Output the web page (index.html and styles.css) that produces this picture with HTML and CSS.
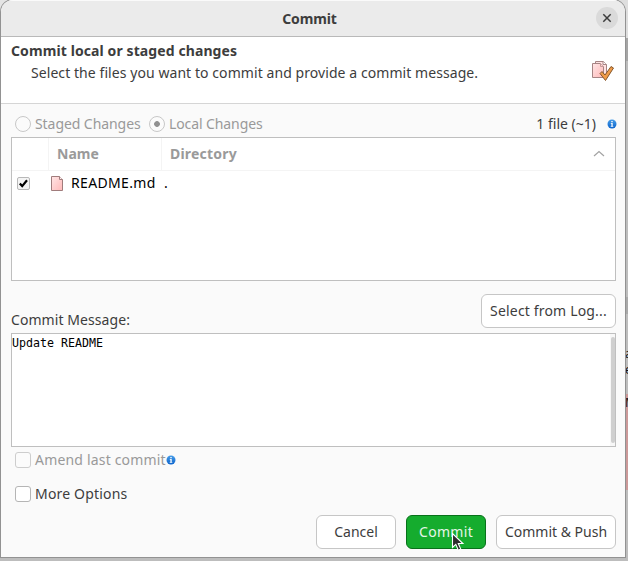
FILE: index.html
```html
<!DOCTYPE html>
<html lang="en">
<head>
<meta charset="utf-8">
<title>Commit</title>
<link rel="stylesheet" href="styles.css">
</head>
<body>
<div class="backdrop" aria-hidden="true">
  <span class="patch top-left"></span><span class="patch top-right"></span>
  <span class="patch band"></span><span class="patch deleted"></span>
  <span class="patch deleted-left"></span><span class="patch chip"></span>
  <span class="peek peek-a">a</span><span class="peek peek-e">e</span><span class="peek peek-m">M</span>
</div>
<main class="dialog">
  <header class="titlebar">
    <h1 class="title">Commit</h1>
    <button class="close" aria-label="Close"><svg width="22" height="22" viewBox="0 0 22 22"><path d="M7.3 7.3l7.4 7.4M14.7 7.3l-7.4 7.4" stroke="#3d3d3d" stroke-width="1.5"/></svg></button>
  </header>
  <section class="banner">
    <div class="banner-text">
      <h2 class="heading">Commit local or staged changes</h2>
      <p class="subtitle">Select the files you want to commit and provide a commit message.</p>
    </div>
    <svg class="banner-icon" width="24" height="22" viewBox="0 0 24 22">
      <defs><linearGradient id="paper" x1="0" y1="0" x2="1" y2="1"><stop offset="0" stop-color="#ffe6e6"/><stop offset="1" stop-color="#ffb9b9"/></linearGradient></defs>
      <path d="M4.500 1.500h8l3 3v11h-11z" fill="#ffe2e2" stroke="#a68484"/>
      <path d="M12 1.500v3h3.500" fill="#fff" stroke="#a68484"/>
      <path d="M1.500 3.500h8l3 3v11h-11z" fill="url(#paper)" stroke="#a68484"/>
      <path d="M9.500 3.500v3h3" fill="#ffd0d0" stroke="#c49a9a"/>
      <path d="M9 13.500l2-2 3 3.500 6-8.500 2.500 1.500-8 12.500z" fill="#f09b48" stroke="#84572c" stroke-linejoin="round"/>
    </svg>
  </section>
  <section class="content">
    <div class="mode-row">
      <span class="radio"></span><span class="label dim staged">Staged Changes</span>
      <span class="radio checked"></span><span class="label dim local">Local Changes</span>
      <span class="count">1 file (~1)</span>
      <svg class="info" width="10" height="10" viewBox="0 0 10 10"><defs><linearGradient id="blue" x1="0" y1="0" x2="0" y2="1"><stop offset="0" stop-color="#479de8"/><stop offset="1" stop-color="#0b63cc"/></linearGradient></defs><circle cx="5" cy="5" r="4.500" fill="url(#blue)"/><path d="M4.300 2h1.400v1.200H4.300zM3.800 4h1.900v3h.6v.8H3.700V7h.7V4.800h-.6z" fill="#fff"/></svg>
    </div>
    <div class="files">
      <div class="files-head">
        <span class="col-check"></span><span class="col-name"><b>Name</b></span>
        <span class="col-dir"><b>Directory</b></span>
        <svg class="sort" width="12" height="8" viewBox="0 0 12 8"><path d="M1 6l5-4.500L11 6" fill="none" stroke="#a3a3a3" stroke-width="1.200"/></svg>
      </div>
      <div class="file-row">
        <svg class="tick" width="13" height="13" viewBox="0 0 13 13"><rect x=".5" y=".5" width="12" height="12" rx="1.500" fill="#f4f4f4" stroke="#b8b8b8"/><path d="M2.800 6.500l2.400 2.600 4.800-5.800" fill="none" stroke="#000" stroke-width="2.200"/></svg>
        <svg class="file" width="12" height="15" viewBox="0 0 12 15"><path d="M.5.5h8l3 3v11H.5z" fill="url(#paper)" stroke="#a07c7c"/><path d="M8.500.5v3h3" fill="#fff0f0" stroke="#a07c7c"/></svg>
        <span class="filename">README.md</span><span class="dirname">.</span>
      </div>
    </div>
    <div class="message-row">
      <span class="message-label">Commit Message:</span>
      <button class="button log">Select from Log...</button>
    </div>
    <div class="message"><span class="message-text">Update README</span><span class="track"><span class="thumb"></span></span></div>
    <div class="option amend">
      <span class="checkbox disabled"></span><span class="label dim">Amend last commit</span>
      <svg class="amend-info" width="10" height="10" viewBox="0 0 10 10"><circle cx="5" cy="5" r="4.500" fill="url(#blue)"/><path d="M4.300 2h1.400v1.200H4.300zM3.800 4h1.900v3h.6v.8H3.700V7h.7V4.800h-.6z" fill="#fff"/></svg>
    </div>
    <div class="option"><span class="checkbox"></span><span class="label">More Options</span></div>
    <footer class="actions">
      <button class="button cancel">Cancel</button>
      <button class="button primary">Commit</button>
      <button class="button push">Commit &amp; Push</button>
    </footer>
  </section>
</main>
<svg class="cursor" width="14" height="20" viewBox="0 0 14 20"><path d="M1.500 1.500v14l3.300-3.100 2.500 5.800 2.500-1.100-2.500-5.600h4.600z" fill="#2c2c2c" stroke="#fff" stroke-width="1.100"/></svg>
</body>
</html>
```
FILE: styles.css
```css
* { box-sizing: border-box; }
body {
  margin: 0;
  width: 628px;
  height: 561px;
  overflow: hidden;
  position: relative;
  background: #bdbdbd;
  color: #3d3d3d;
  font: 14px/20px "Noto Sans", "Open Sans", sans-serif;
  white-space: nowrap;
}
h1, h2, p { margin: 0; }
button { padding: 0; border: 0; font: inherit; color: inherit; }
svg { display: block; flex: none; }

.backdrop { position: absolute; inset: 0; }
.patch { position: absolute; }
.top-left { left: 0; top: 0; width: 12px; height: 12px; background: #e4e4e4; }
.top-right { right: 0; top: 0; width: 12px; height: 38px; background: #dedede; }
.band { right: 0; top: 38px; width: 3px; height: 23px; background: #a5a5a5; }
.chip { right: 0; top: 297px; width: 3px; height: 17px; background: #a9a9a9; }
.deleted { right: 0; top: 394px; width: 3px; height: 96px; background: #c99; }
.deleted-left { left: 0; top: 394px; width: 1px; height: 34px; background: #c99; }
.peek { position: absolute; left: 625px; color: #111; font-size: 12px; line-height: 14px; }
.peek-a { top: 347px; }
.peek-e { top: 363px; }
.peek-m { top: 396px; }

.dialog {
  position: relative;
  width: 624px;
  height: 557px;
  margin-left: 1px;
  overflow: hidden;
  background: #fafafa;
  border-radius: 12px 12px 0 0;
  box-shadow: 0 0 0 1px #929292;
}
.titlebar {
  display: flex;
  align-items: center;
  height: 37px;
  padding: 0 7px 0 22px;
  background: #ebebeb;
  border-bottom: 1px solid #b9b9b9;
  box-shadow: inset 0 1px #fafafa;
}
.title { flex: 1; padding-top: 2px; text-align: center; font-size: 14px; line-height: 20px; letter-spacing: -.1px; }
.close { width: 22px; height: 22px; border-radius: 50%; background: #dadada; }
.banner {
  display: flex;
  justify-content: space-between;
  height: 67px;
  padding: 4px 10px 0;
  background: #fff;
  border-bottom: 1px solid #d5d5d5;
}
.heading { font-size: 14px; line-height: 20px; letter-spacing: .1px; }
.subtitle { padding: 2px 0 0 20px; letter-spacing: .07px; }
.banner-icon { margin-top: 19px; }

.content { padding: 10px 9px 0 10px; }
.mode-row { display: flex; align-items: center; height: 20px; padding-left: 4px; }
.radio {
  width: 16px;
  height: 16px;
  border: 1px solid #c8c8c8;
  border-radius: 50%;
  background: #fbfbfb;
}
.radio.checked { background: radial-gradient(circle, #919191 2.5px, #fbfbfb 3.2px); }
.label { margin-left: 4px; letter-spacing: .18px; }
.dim { color: #999; }
.staged { width: 114px; letter-spacing: -.07px; }
.local { letter-spacing: -.1px; }
.count { margin-left: auto; }
.info { margin-left: 11px; margin-right: -1px; }

.files { height: 144px; margin-top: 3px; border: 1px solid #bfbfbf; background: #fff; }
.files-head { display: flex; align-items: center; height: 33px; border-bottom: 1px solid #f4f4f4; color: #9a9a9a; }
.col-check { width: 37px; height: 32px; border-right: 1px solid #f4f4f4; }
.col-name { width: 113px; height: 32px; padding: 6px 0 0 8px; border-right: 1px solid #f4f4f4; }
.col-dir { flex: 1; padding-left: 8px; letter-spacing: .2px; }
.sort { margin-right: 10px; }
.file-row { display: flex; align-items: center; height: 24px; padding-left: 5px; color: #000; }
.file { margin-left: 21px; }
.filename { width: 93px; margin-left: 8px; letter-spacing: .35px; }

.message-row { display: flex; align-items: flex-end; justify-content: space-between; height: 52px; padding-bottom: 5px; }
.message-label { margin-bottom: -2px; letter-spacing: .07px; }
.button {
  display: flex;
  align-items: center;
  justify-content: center;
  height: 34px;
  border: 1px solid #c6c6c6;
  border-radius: 6px;
  background: #fff;
}
.log { width: 135px; letter-spacing: .17px; }
.message {
  display: flex;
  justify-content: space-between;
  height: 114px;
  border: 1px solid #bfbfbf;
  background: #fff;
  color: #000;
}
.message-text { font: 11.63px/18px "DejaVu Sans Mono", monospace; }
.track { width: 5px; padding-top: 3px; background: #f7f7f7; }
.thumb { display: block; width: 4px; height: 106px; margin-left: 1px; border-radius: 2px; background: #cfcfcf; }
.option { display: flex; align-items: center; height: 20px; margin-top: 13px; padding-left: 4px; }
.option.amend { margin-top: 3px; margin-bottom: 14px; }
.option.amend + .option { margin-top: 0; }
.checkbox { width: 16px; height: 16px; border: 1px solid #b5b5b5; border-radius: 3px; background: #fff; }
.checkbox.disabled { border-color: #cdcdcd; background: #fbfbfb; }
.actions { display: flex; justify-content: flex-end; gap: 10px; margin-top: 11px; }
.cancel, .primary { width: 80px; }
.push { width: 120px; }
.primary { color: #e6f5e8; background: #15ac2e; border-color: #08711a; letter-spacing: .3px; }
.cursor { position: absolute; left: 451px; top: 532px; }
```
